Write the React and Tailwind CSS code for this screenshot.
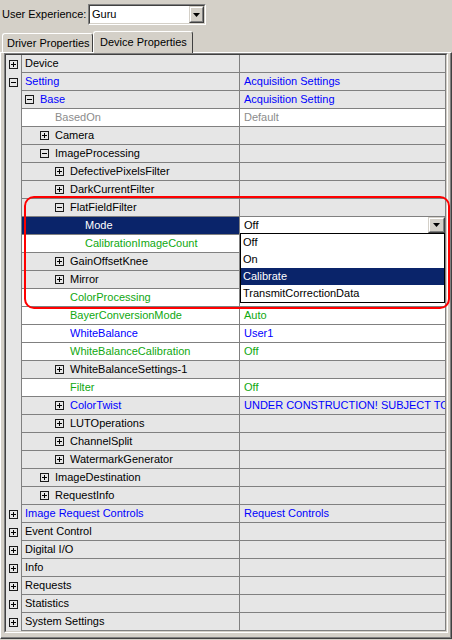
import React from "react";

const rows = [
  { name: "Device", level: 0, box: "plus" },
  { name: "Setting", level: 0, box: "minus", color: "blue", value: "Acquisition Settings", valueColor: "blue" },
  { name: "Base", level: 1, box: "minus", color: "blue", value: "Acquisition Setting", valueColor: "blue" },
  { name: "BasedOn", level: 2, color: "gray", value: "Default", valueColor: "gray" },
  { name: "Camera", level: 2, box: "plus" },
  { name: "ImageProcessing", level: 2, box: "minus" },
  { name: "DefectivePixelsFilter", level: 3, box: "plus" },
  { name: "DarkCurrentFilter", level: 3, box: "plus" },
  { name: "FlatFieldFilter", level: 3, box: "minus" },
  { name: "Mode", level: 4, selected: true, combo: true },
  { name: "CalibrationImageCount", level: 4, color: "green" },
  { name: "GainOffsetKnee", level: 3, box: "plus" },
  { name: "Mirror", level: 3, box: "plus" },
  { name: "ColorProcessing", level: 3, color: "green" },
  { name: "BayerConversionMode", level: 3, color: "green", value: "Auto", valueColor: "green" },
  { name: "WhiteBalance", level: 3, color: "blue", value: "User1", valueColor: "blue" },
  { name: "WhiteBalanceCalibration", level: 3, color: "green", value: "Off", valueColor: "green" },
  { name: "WhiteBalanceSettings-1", level: 3, box: "plus" },
  { name: "Filter", level: 3, color: "green", value: "Off", valueColor: "green" },
  { name: "ColorTwist", level: 3, box: "plus", color: "blue", value: "UNDER CONSTRUCTION! SUBJECT TO CHANGE!", valueColor: "blue" },
  { name: "LUTOperations", level: 3, box: "plus" },
  { name: "ChannelSplit", level: 3, box: "plus" },
  { name: "WatermarkGenerator", level: 3, box: "plus" },
  { name: "ImageDestination", level: 2, box: "plus" },
  { name: "RequestInfo", level: 2, box: "plus" },
  { name: "Image Request Controls", level: 0, box: "plus", color: "blue", value: "Request Controls", valueColor: "blue" },
  { name: "Event Control", level: 0, box: "plus" },
  { name: "Digital I/O", level: 0, box: "plus" },
  { name: "Info", level: 0, box: "plus" },
  { name: "Requests", level: 0, box: "plus" },
  { name: "Statistics", level: 0, box: "plus" },
  { name: "System Settings", level: 0, box: "plus" },
];

const textColors = {
  blue: "text-[#0000ff]",
  green: "text-[#10a810]",
  gray: "text-[#8c8c8c]",
  black: "text-black",
};

// padding in px -> class (indent is 15px per level)
const pads = {
  3: "pl-[3px]",
  18: "pl-[18px]",
  33: "pl-[33px]",
  48: "pl-[48px]",
  63: "pl-[63px]",
};

function ExpandBox({ kind }) {
  return (
    <svg width="9" height="9" viewBox="0 0 9 9" className="shrink-0">
      <rect x="0.5" y="0.5" width="8" height="8" fill="none" stroke="#1a1a1a" />
      <path d="M2 4.5h5" stroke="#000" />
      {kind === "plus" ? <path d="M4.5 2v5" stroke="#000" /> : null}
    </svg>
  );
}

function DownArrow() {
  return (
    <svg width="7" height="4" viewBox="0 0 7 4">
      <path d="M0 0h7L3.5 4z" fill="#000" />
    </svg>
  );
}

function ArrowButton({ className }) {
  return (
    <div className={"border-t border-l border-[#d4d0c8] border-r border-b border-r-[#404040] border-b-[#404040] bg-[#d4d0c8] " + className}>
      <div className="w-full h-full border-t border-l border-white border-r border-b border-r-[#808080] border-b-[#808080] flex items-center justify-center">
        <DownArrow />
      </div>
    </div>
  );
}

function GridRow({ row }) {
  const white = !row.box;
  const bg = white ? "bg-white" : "bg-[#e6e6e6]";
  let pad;
  if (row.level === 0) pad = 3;
  else if (row.box) pad = 3 + 15 * (row.level - 1);
  else pad = 3 + 15 * row.level;

  return (
    <div className="flex h-[18px]">
      <div className="w-[16px] shrink-0 bg-[#e6e6e6] border-r border-[#808080] flex items-center pl-[3px]">
        {row.level === 0 ? <ExpandBox kind={row.box} /> : null}
      </div>
      <div
        className={
          "w-[218px] shrink-0 border-b border-r border-[#808080] flex items-center whitespace-nowrap overflow-hidden " +
          pads[pad] +
          " " +
          (row.selected ? "bg-[#0a246a] text-white" : bg + " " + textColors[row.color || "black"])
        }
      >
        {row.level > 0 && row.box ? (
          <span className="mr-[6px] flex">
            <ExpandBox kind={row.box} />
          </span>
        ) : null}
        <span>{row.name}</span>
      </div>
      {row.combo ? (
        <div className="relative w-[206px] shrink-0 border-b border-r border-[#808080] bg-white text-black flex items-start pl-[4px] whitespace-nowrap">
          <span className="mt-[3px]">Off</span>
          <ArrowButton className="absolute right-0 top-0 w-[17px] h-[16px]" />
          <div className="absolute left-0 right-0 top-[16px] z-20 bg-white border border-black">
            <div className="h-[17px] flex items-center pl-[2px]">Off</div>
            <div className="h-[17px] flex items-center pl-[2px]">On</div>
            <div className="h-[17px] flex items-center pl-[2px] bg-[#0a246a] text-white">Calibrate</div>
            <div className="h-[17px] flex items-center pl-[2px]">TransmitCorrectionData</div>
          </div>
        </div>
      ) : (
        <div
          className={
            "w-[206px] shrink-0 border-b border-r border-[#808080] flex items-center pl-[4px] whitespace-nowrap overflow-hidden " +
            bg +
            " " +
            textColors[row.valueColor || "black"]
          }
        >
          {row.value}
        </div>
      )}
    </div>
  );
}

export default function App() {
  return (
    <div
      className="relative w-[452px] h-[640px] overflow-hidden bg-[#d4d0c8] text-[11px] leading-none text-black"
      style={{ fontFamily: '"Liberation Sans", Arial, sans-serif' }}
    >
      {/* user experience selector */}
      <div className="h-[31px] flex items-start pt-[4px] pl-[2px]">
        <div className="w-[86px] h-[21px] flex items-center">User Experience:</div>
        <div className="w-[118px] h-[21px] border-t border-l border-[#808080] border-r border-b border-r-white border-b-white">
          <div className="w-full h-full border-t border-l border-[#404040] border-r border-b border-r-[#d4d0c8] border-b-[#d4d0c8] bg-white flex items-center pl-[2px]">
            <span className="flex-1">Guru</span>
            <ArrowButton className="w-[15px] h-[17px]" />
          </div>
        </div>
      </div>

      {/* tabs */}
      <div className="h-[21px] flex items-end pl-[2px]">
        <div className="w-[91px] h-[19px] border-t border-l border-white border-r border-r-[#404040] rounded-t-[3px] flex items-center pl-[4px]">
          <span className="mt-[1px]">Driver Properties</span>
        </div>
        <div className="relative z-10 -mb-px w-[100px] h-[22px] bg-[#d4d0c8] border-t border-l border-white border-r border-r-[#404040] rounded-t-[3px] flex items-center pl-[6px]">
          <span className="-mt-[1px]">Device Properties</span>
        </div>
      </div>

      {/* tab panel */}
      <div className="h-[587px] border-t border-l border-white border-r border-b border-r-[#404040] border-b-[#404040]">
        <div className="h-full border-r border-b border-[#808080] pl-[3px] pr-[2px]">
          <div className="border-t border-l border-[#808080] border-r border-b border-r-white border-b-white">
            <div className="border-t border-l border-[#404040] border-r border-b border-r-[#d4d0c8] border-b-[#d4d0c8]">
              {rows.map((row) => (
                <GridRow key={row.name} row={row} />
              ))}
            </div>
          </div>
        </div>
      </div>

      {/* red highlight drawn over the screenshot */}
      <div className="absolute left-[24px] top-[196px] w-[426px] h-[113px] border-2 border-[#ff0000] rounded-[10px] z-30 pointer-events-none" />
    </div>
  );
}
